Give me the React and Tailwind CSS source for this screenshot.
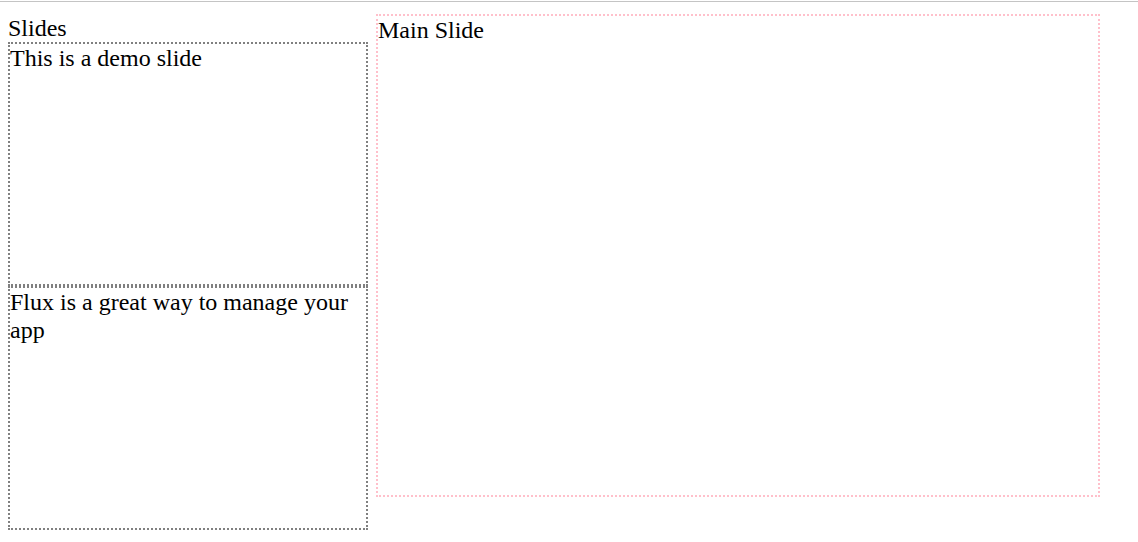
export default function App() {
  const slides = ["This is a demo slide", "Flux is a great way to manage your app"];

  return (
    <div className="min-h-screen bg-white pt-px text-black font-['Liberation_Serif','Times_New_Roman',serif] text-[24px] leading-[28px]">
      <div className="h-px bg-[#c4c4c4]" />
      <div className="flex items-start gap-2 px-2 pt-3">
        {/* slide list */}
        <div className="w-[360px]">
          <div>Slides</div>
          {slides.map((text, i) => (
            <div
              key={i}
              className="h-[244px] border-2 border-dotted border-[#808080]"
            >
              {text}
            </div>
          ))}
        </div>

        {/* current slide */}
        <div className="w-[724px] h-[483px] border-2 border-dotted border-[#ffc0cb]">
          Main Slide
        </div>
      </div>
    </div>
  );
}
